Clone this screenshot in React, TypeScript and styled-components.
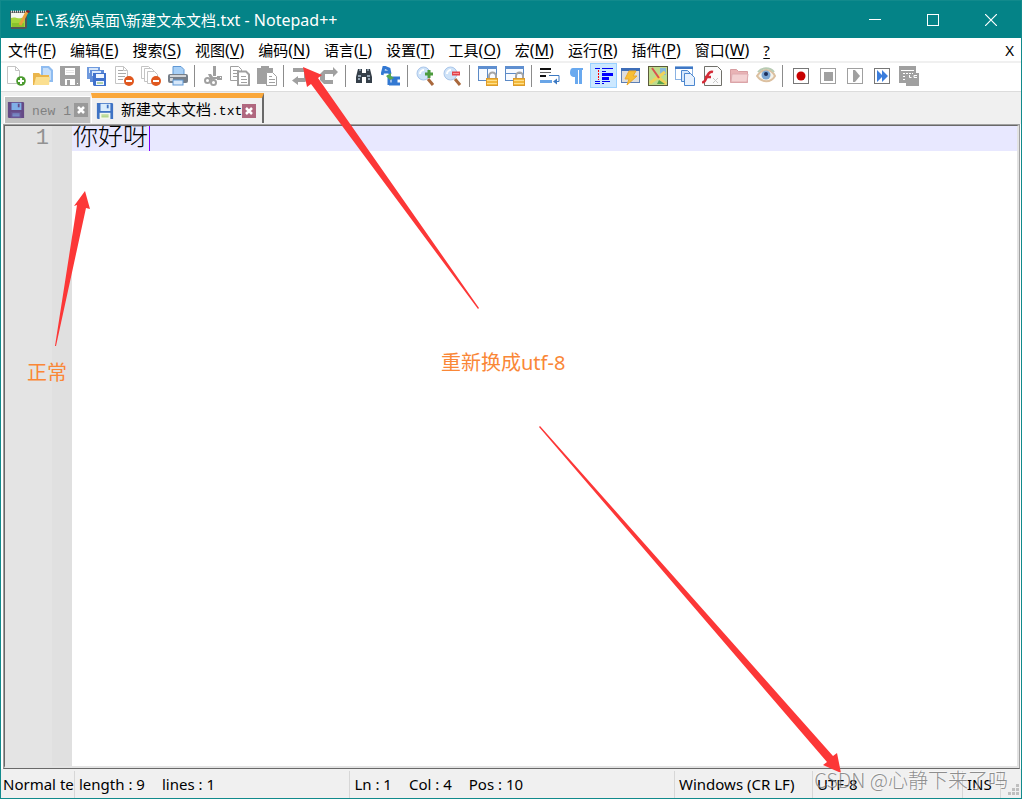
import React from "react";
import styled, { createGlobalStyle } from "styled-components";

const ui = `"Noto Sans", "Open Sans", "Noto Sans CJK SC", sans-serif`;
const mono = `"Liberation Mono", "Noto Sans CJK SC", monospace`;

const Global = createGlobalStyle`
  * { box-sizing: border-box; }
  body { margin: 0; font-family: ${ui}; font-size: 15px; color: #000; }
  button { font: inherit; color: inherit; background: none; border: 0; padding: 0; margin: 0; }
`;

const Window = styled.div`
  position: relative;
  display: flex;
  flex-direction: column;
  min-height: 100vh;
  border: 1px solid #118a8c;
  background: #fff;
  overflow: hidden;
`;

const TitleBar = styled.header`
  display: flex;
  align-items: center;
  height: 37px;
  padding: 0 1px 0 8px;
  background: #048387;
  color: #fff;
`;

const Title = styled.h1`
  flex: 1;
  margin: 0 0 0 5px;
  font-size: 15px;
  font-weight: 400;
  line-height: 20px;
  white-space: nowrap;
`;

const Latin = styled.span`
  font-size: 16px;
`;

const WindowButton = styled.button`
  display: flex;
  align-items: center;
  justify-content: center;
  width: 58px;
  height: 37px;
`;

const MenuBar = styled.nav`
  display: flex;
  gap: 14px;
  height: 25px;
  padding: 0 7px;
  border-bottom: 2px solid #f0f0f0;
`;

const MenuItem = styled.button<{ $last?: boolean }>`
  line-height: 24px;
  white-space: nowrap;
  margin-left: ${(p) => (p.$last ? "auto" : "0")};
  u { text-underline-offset: 2px; }
`;

const ToolBar = styled.div`
  display: flex;
  height: 29px;
  padding-left: 1px;
  border-bottom: 1px solid #dcdcdc;
`;

const ToolButton = styled.button<{ $on?: boolean }>`
  display: flex;
  align-items: center;
  justify-content: center;
  width: 27px;
  height: 25px;
  border: 1px solid ${(p) => (p.$on ? "#99d1ff" : "transparent")};
  background: ${(p) => (p.$on ? "#cce8ff" : "none")};
`;

const Separator = styled.span`
  width: 8px;
  height: 22px;
  margin-top: 2px;
  background: linear-gradient(#8c8c8c, #8c8c8c) 3px 0 / 1px 100% no-repeat;
`;

const TabStrip = styled.div`
  display: flex;
  align-items: flex-end;
  height: 32px;
  padding: 0 3px 1px;
  background: #f0f0f0;
`;

const Tab = styled.div<{ $active?: boolean }>`
  display: flex;
  align-items: center;
  height: ${(p) => (p.$active ? "30px" : "27px")};
  padding: 0 ${(p) => (p.$active ? "6px" : "2px")} 0 ${(p) => (p.$active ? "4px" : "2px")};
  border-top: ${(p) => (p.$active ? "5px solid #faa83c" : "1px solid #fff")};
  border-left: 1px solid #fff;
  border-right: ${(p) => (p.$active ? "2px solid #696969" : "1px solid #e8e8e8")};
  background: ${(p) => (p.$active ? "#f0f0f0" : "#c0c0c0")};
  color: ${(p) => (p.$active ? "#000" : "#808080")};
`;

const TabLabel = styled.button`
  margin-left: 7px;
  padding-top: 3px;
  font-family: ${mono};
  font-size: 13px;
  line-height: 20px;
  white-space: pre;
`;

const TabName = styled.span`
  font-size: 15px;
`;

const TabClose = styled.button<{ $active?: boolean }>`
  display: flex;
  width: 14px;
  height: 14px;
  margin-left: ${(p) => (p.$active ? "0" : "3px")};
  background: ${(p) => (p.$active ? "#b0677f" : "#999")};
`;

const Frame = styled.main`
  flex: 1;
  display: flex;
  margin: 0 1px 0 2px;
  border: 1px solid #a0a0a0;
  border-bottom-color: #696969;
`;

const Editor = styled.div`
  flex: 1;
  display: flex;
  border-style: solid;
  border-width: 1px 2px 2px 1px;
  border-color: #696969 #e3e3e3 #e3e3e3 #696969;
`;

const LineNumbers = styled.div`
  width: 47px;
  padding-right: 3px;
  background: #e4e4e4;
  color: #929292;
  font: 22px/25px ${mono};
  text-align: right;
`;

const FoldMargin = styled.div`
  width: 20px;
  background: #e0e0e0;
`;

const TextPane = styled.div`
  position: relative;
  flex: 1;
  display: flex;
`;

const Source = styled.textarea`
  flex: 1;
  border: 0;
  outline: 0;
  margin: 0;
  padding: 0 1px;
  resize: none;
  color: #000;
  background: linear-gradient(#e8e8ff, #e8e8ff) 0 0 / 100% 25px no-repeat #fff;
  font: 300 25px/25px ${mono};
`;

const Caret = styled.span`
  position: absolute;
  left: 77px;
  top: 0;
  width: 1px;
  height: 25px;
  background: #8000ff;
`;

const StatusBar = styled.footer`
  display: flex;
  height: 29px;
  padding-top: 2px;
  background: #f0f0f0;
`;

const StatusCell = styled.div<{ $w?: number; $grow?: number }>`
  flex: ${(p) => (p.$grow ? `${p.$grow} 1 0` : `0 0 ${p.$w}px`)};
  display: flex;
  gap: 17px;
  height: 27px;
  padding-left: ${(p) => (p.$w === 74 ? "2px" : "4px")};
  border-right: 1px solid #d7d7d7;
  line-height: 26px;
  white-space: nowrap;
  overflow: hidden;
`;

const Grip = styled.div`
  flex: 0 0 20px;
  display: flex;
  align-items: flex-end;
  justify-content: flex-end;
  padding: 0 1px 2px 0;
`;

const Note = styled.p<{ $x: number; $y: number }>`
  position: absolute;
  left: ${(p) => p.$x}px;
  top: ${(p) => p.$y}px;
  margin: 0;
  color: #fa8737;
  font-size: 20px;
  line-height: 24px;
  white-space: nowrap;
`;

const Arrow = styled.svg<{ $x: number; $y: number }>`
  position: absolute;
  left: ${(p) => p.$x}px;
  top: ${(p) => p.$y}px;
  fill: #fc3737;
  pointer-events: none;
`;

const Watermark = styled.p`
  position: absolute;
  right: 13px;
  bottom: 5px;
  margin: 0;
  color: rgba(110, 110, 110, 0.75);
  font-size: 20px;
  font-weight: 300;
  font-family: "Noto Sans CJK SC", sans-serif;
  line-height: 26px;
  white-space: nowrap;
  text-shadow: -1px -1px 0 rgba(255, 255, 255, 0.5);
`;

const G = "#a0a0a0";

const page = (x: number, y: number, stroke = "#9a9a9a", fill = "#fff") => (
  <path d={`M${x + 0.5} ${y + 0.5}h8l4 4v13h-12zM${x + 8.5} ${y + 0.5}v4h4`} fill={fill} stroke={stroke} />
);

const floppy = (a: string, b: string, c: string, slot = "#8cc152") => (
  <>
    <path d="M1 1h17l1 1v17H2l-1-1z" fill={a} />
    <rect x="5" y="2" width="11" height="8" fill={b} />
    <rect x="12" y="3" width="2" height="4" fill={a} />
    <rect x="4" y="12" width="12" height="7" fill={c} />
    <rect x="6" y="14" width="8" height="1" fill={slot} />
    <rect x="6" y="16" width="8" height="1" fill={slot} />
  </>
);

const minusBadge = (
  <>
    <circle cx="15" cy="15" r="5" fill="#e0581f" />
    <path d="M12 15h6" stroke="#fff" strokeWidth="2" />
  </>
);

const lens = (
  <>
    <path d="M12 13l5 6" stroke="#a9683c" strokeWidth="3" />
    <circle cx="7.5" cy="7.5" r="6.5" fill="#cfe3f8" stroke="#a9c6ea" />
    <path d="M4 8a4 4 0 0 1 4-4" stroke="#fff" strokeWidth="2" fill="none" />
  </>
);

const lock = (
  <>
    <path d="M11 13V10a3.500 3.500 0 0 1 7 0v3" stroke="#a5a5a5" strokeWidth="2" fill="none" />
    <rect x="8" y="12" width="12" height="8" fill="#f2b93b" />
    <path d="M9 14.500h10M9 17.500h10" stroke="#ffdf8b" />
    <rect x="8.500" y="12.500" width="11" height="7" fill="none" stroke="#dc9a2b" />
  </>
);

const panel = (
  <>
    <rect x="0.500" y="0.500" width="18" height="14" fill="#f7faff" stroke="#5c8ac6" />
    <rect x="0" y="0" width="19" height="3" fill="#5f8fd0" />
  </>
);

const icons: Record<string, React.ReactNode> = {
  新建: (
    <>
      {page(1, 0, "#c4c4c4")}
      <circle cx="15" cy="15" r="4.800" fill="#4b9b2f" />
      <path d="M15 12v6M12 15h6" stroke="#fff" strokeWidth="2" />
    </>
  ),
  打开: (
    <>
      <path d="M8 0h8l4 4v12H8z" fill="#8fbcf0" />
      <path d="M10 2h5l3 3v9h-8z" fill="#c5defa" />
      <path d="M0 7h6l2 2h8v10H0z" fill="#eab54c" />
      <path d="M1 19l2-8h14l-1 8z" fill="#fbdf90" />
    </>
  ),
  保存: (
    <>
      <path d="M0 0h20v20H1l-1-1z" fill={G} />
      <path d="M5 2h10v7H5zM5 13h10v6H5z" fill="#fff" />
      <path d="M6 4.500h8M6 6.500h8" stroke="#e4e4e4" />
      <path d="M7 14h3v5H7z" fill={G} />
      <path d="M17 17h1v1h-1z" fill="#fff" />
    </>
  ),
  全部保存: (
    <>
      <path d="M0 1h13v12H0z" fill="#6f9ade" />
      <path d="M2 2h9v5H2z" fill="#d7e7fb" />
      <path d="M3 4h14v12H3z" fill="#5f8cd8" />
      <path d="M5 5h9v5H5z" fill="#d7e7fb" />
      <path d="M6 7h13v13H7l-1-1z" fill="#3f71cc" />
      <path d="M9 8h8v4H9zM9 15h8v4H9z" fill="#eef5ff" />
      <path d="M10 17h6" stroke="#79b256" />
    </>
  ),
  关闭: (
    <>
      {page(1, 0, "#c4c4c4")}
      <path d="M4 4.500h5M4 7.500h8M4 10.500h7M4 13.500h5" stroke="#aaa" />
      {minusBadge}
    </>
  ),
  全部关闭: (
    <>
      <path d="M.5 .5h7l3 3v9H.5z" fill="#fff" stroke="#c4c4c4" />
      <path d="M3.500 2.500h7l3 3v10h-10z" fill="#fff" stroke="#c4c4c4" />
      <path d="M6.500 5.500h7l3 3v9h-10z" fill="#fff" stroke="#c4c4c4" />
      {minusBadge}
    </>
  ),
  打印: (
    <>
      <path d="M5 .5h8l3 3v7H5z" fill="#a8d0f7" stroke="#5f97d3" />
      <rect x="0" y="8" width="20" height="9" rx="2" fill="#777f89" />
      <path d="M2 10h16" stroke="#d2d5d8" strokeWidth="2" />
      <rect x="2" y="12" width="3" height="3" fill="#d5d8db" />
      <rect x="5" y="14" width="10" height="5" fill="#d7e8fa" stroke="#5f97d3" />
    </>
  ),
  剪切: (
    <>
      <path d="M10 0h3v10h-3zM5 8h3l2 3h5v2h-5l-2 2z" fill={G} />
      <path d="M14 10h5v4h-5z" fill={G} />
      <path d="M17 11h1v1h-1z" fill="#fff" />
      <circle cx="4.500" cy="14.500" r="2.500" fill="none" stroke={G} strokeWidth="2" />
      <circle cx="10.500" cy="16.500" r="2.500" fill="none" stroke={G} strokeWidth="2" />
    </>
  ),
  复制: (
    <>
      <path d="M.5 .5h8l3 3v11H.5z" fill="#fff" stroke={G} />
      <path d="M3 4.500h6M3 7.500h6M3 10.500h4" stroke={G} />
      <path d="M8 5.500h8l3 3v11H8z" fill="#fff" stroke={G} strokeWidth="2" />
      <path d="M11 10.500h5M11 13.500h6M11 16.500h6" stroke={G} />
    </>
  ),
  粘贴: (
    <>
      <path d="M0 2h4V0h8v2h4v16H0z" fill={G} />
      <path d="M9.500 6.500h6l4 4v9h-10z" fill="#fff" stroke={G} />
      <path d="M12 10.500h3M12 13.500h6M12 16.500h6" stroke={G} />
    </>
  ),
  撤销: <path d="M1 2h12l3 3v9l-3 2H6v3l-6-4.500L6 10v2h6V6H1z" fill={G} />,
  重做: <path d="M19 6l-5-5v3H5L1 8v6l4 4h9v-4H6V8h8v3z" fill={G} />,
  查找: (
    <>
      <path d="M4 3h4v4h4V3h4l2 8v6h-6v-6H8v6H2v-6z" fill="#353f49" />
      <path d="M4 10h3M13 10h3M4 13h2M14 13h2" stroke="#93a4b4" strokeWidth="2" />
      <path d="M5 4h2M13 4h2" stroke="#7d8c99" strokeWidth="2" />
    </>
  ),
  替换: (
    <>
      <path d="M1 9L3 1l5 2 1 5M2 6h6" stroke="#3278d2" strokeWidth="3" fill="none" />
      <path d="M8 9v10M8 12h4v6H8M19 12h-4v6h4" stroke="#3278d2" strokeWidth="3" fill="none" />
      <path d="M5 10l5-3v3l3 2-4 2z" fill="#57a850" />
    </>
  ),
  放大: (
    <>
      {lens}
      <path d="M13 4v8M9 8h8" stroke="#4c9b3d" strokeWidth="3" />
    </>
  ),
  缩小: (
    <>
      {lens}
      <path d="M9 7.500h8" stroke="#e4434b" strokeWidth="4" />
      <path d="M10 7.500h6" stroke="#f89095" />
    </>
  ),
  同步垂直滚动: (
    <>
      {panel}
      <path d="M9.500 3v12" stroke="#5c8ac6" />
      {lock}
    </>
  ),
  同步水平滚动: (
    <>
      {panel}
      <path d="M0 7.500h18" stroke="#5c8ac6" />
      {lock}
    </>
  ),
  自动换行: (
    <>
      <path d="M0 3h11M0 10h6" stroke="#111" strokeWidth="2" />
      <path d="M0 6.500h11" stroke="#666" />
      <path d="M9 9.500h10v6h-3" stroke="#3c79c2" fill="none" />
      <path d="M13 15.500l4-3v6z" fill="#3c79c2" />
      <path d="M0 15.500h12" stroke="#69a5e7" strokeWidth="3" />
    </>
  ),
  显示所有字符: <path d="M6 2h10v2h-1v14h-3V4h-1v14H8v-7C4 11 3 9 3 6.500S4 2 6 2z" fill="#69a9ef" />,
  显示缩进参考线: (
    <>
      <path d="M1 2.500h5M8 2.500h11M8 5.500h4M1 15.500h5M1 17.500h5M8 15.500h8M8 17.500h2" stroke="#0000ee" />
      <path d="M8 8.500h11M8 12.500h7" stroke="#0000ff" strokeWidth="3" />
      <path d="M4.500 4v10" stroke="#ff0000" strokeDasharray="2 1" />
    </>
  ),
  自定义语言: (
    <>
      <rect x="0.500" y="2.500" width="18" height="14" fill="#dedede" stroke="#5c7fb6" />
      <path d="M0 3.500h19" stroke="#3e6eb8" strokeWidth="3" />
      <path d="M8 5h7l-3 5h4L6 19l2-6H4z" fill="#f7bf36" stroke="#eba92c" />
    </>
  ),
  文档地图: (
    <>
      <rect x="0.500" y="0.500" width="19" height="19" fill="#bfdc8c" stroke="#5a5a3c" />
      <path d="M12 2h6v7h-6z" fill="#86b8dc" />
      <path d="M2 17L17 6M10 11l8 7" stroke="#f1d35b" strokeWidth="3" />
      <path d="M4 2l7 10" stroke="#d9534f" strokeWidth="2" />
      <path d="M11 14l6 4H9z" fill="#58a34d" />
    </>
  ),
  文档列表: (
    <>
      <rect x="0.500" y="0.500" width="17" height="13" fill="#fff" stroke="#8ab2e2" />
      <path d="M0 2h18" stroke="#3f77c4" strokeWidth="2" />
      <path d="M6.500 4.500h6l3 3v8h-9z" fill="#d5e7fb" stroke="#4c87cf" />
      <path d="M9.500 7.500h6l4 4v8h-10z" fill="#e7f1fd" stroke="#4c87cf" />
    </>
  ),
  函数列表: (
    <>
      <path d="M2.500 .5h13l4 4v15h-17z" fill="#fbfbfb" stroke="#70706a" />
      <path d="M0 16c5 2 4-12 11-10M3 11h6" stroke="#d32a36" strokeWidth="2.500" fill="none" />
      <path d="M11 12l5 5M16 12l-5 5" stroke="#c9c9c9" />
    </>
  ),
  文件夹工作区: (
    <>
      <path d="M1.500 3.500h6l2 2h9v11h-17z" fill="#e9b3b5" stroke="#d79da1" />
      <path d="M2 16l1-8h16l-1 8z" fill="#f3d1d2" stroke="#dfabaf" />
    </>
  ),
  监视: (
    <>
      <path d="M1 10c5-8 14-8 18 0-4 7-13 7-18 0z" fill="#f4f3ec" stroke="#dcc0a0" strokeWidth="2" />
      <path d="M2 6c4-5 12-5 16 0" stroke="#b8cbb3" strokeWidth="2" fill="none" />
      <circle cx="10" cy="9" r="4.500" fill="#7ba5d2" />
      <circle cx="10" cy="8" r="2" fill="#1b2e59" />
    </>
  ),
  录制宏: (
    <>
      <rect x="2.500" y="2.500" width="15" height="15" fill="#fff" stroke="#777" />
      <circle cx="10" cy="10" r="4.500" fill="#c80000" />
    </>
  ),
  停止录制: (
    <>
      <rect x="2.500" y="2.500" width="15" height="15" fill="#fff" stroke={G} />
      <rect x="6" y="6" width="9" height="9" fill={G} />
    </>
  ),
  播放宏: (
    <>
      <rect x="2.500" y="2.500" width="15" height="15" fill="#fff" stroke={G} />
      <path d="M8 4h2l5 6-5 6H8z" fill={G} />
    </>
  ),
  多次运行宏: (
    <>
      <rect x="2.500" y="2.500" width="15" height="15" fill="#fff" stroke="#777" />
      <path d="M5 4l5 5V4l6 6-6 6v-5l-5 5z" fill="#3b7ddc" />
    </>
  ),
  保存宏: (
    <>
      <path d="M0 0h17v17H0zM7 7h13v13H7z" fill={G} />
      <path d="M2 4.500h13" stroke="#fff" />
      <path d="M4 7.500h10M4 10.500h3M4 13.500h3" stroke="#fff" strokeDasharray="2 1" />
      <path d="M10.500 9v2.500h2M18 9.500h-3v2h3" stroke="#fff" fill="none" />
    </>
  ),
};

const toolGroups = [
  ["新建", "打开", "保存", "全部保存", "关闭", "全部关闭", "打印"],
  ["剪切", "复制", "粘贴"],
  ["撤销", "重做"],
  ["查找", "替换"],
  ["放大", "缩小"],
  ["同步垂直滚动", "同步水平滚动"],
  ["自动换行", "显示所有字符", "显示缩进参考线", "自定义语言", "文档地图", "文档列表", "函数列表", "文件夹工作区", "监视"],
  ["录制宏", "停止录制", "播放宏", "多次运行宏", "保存宏"],
];

const menus = [
  ["文件", "F"],
  ["编辑", "E"],
  ["搜索", "S"],
  ["视图", "V"],
  ["编码", "N"],
  ["语言", "L"],
  ["设置", "T"],
  ["工具", "O"],
  ["宏", "M"],
  ["运行", "R"],
  ["插件", "P"],
  ["窗口", "W"],
];

const CloseMark = () => (
  <svg width="14" height="14" viewBox="0 0 14 14">
    <path d="M4 4l6 6M10 4l-6 6" stroke="#fff" strokeWidth="2.500" />
  </svg>
);

export default function App() {
  return (
    <Window>
      <Global />
      <TitleBar>
        <svg width="21" height="21" viewBox="0 0 21 21">
          <path d="M1 2h17v17l-2 1H2z" fill="#555" />
          <path d="M2 4h14v14H2z" fill="#f4f6ee" />
          <path d="M2 9c4-2 8 2 14-1v10H2z" fill="#a5d63c" />
          <path d="M3 14h12v4H3z" fill="#8ac22c" />
          <path d="M2 2.500h15" stroke="#ddd" strokeWidth="2" strokeDasharray="1 1" />
          <path d="M18 3l-7 13" stroke="#e8a23d" strokeWidth="3" />
          <path d="M18 1l3 1-1 2-3-1z" fill="#8d1f24" />
        </svg>
        <Title>
          <Latin>E:\</Latin>系统<Latin>\</Latin>桌面<Latin>\</Latin>新建文本文档<Latin>.txt - Notepad++</Latin>
        </Title>
        <WindowButton aria-label="最小化">
          <svg width="12" height="12"><path d="M0 5.500h12" stroke="#fff" /></svg>
        </WindowButton>
        <WindowButton aria-label="最大化">
          <svg width="12" height="12"><rect x="0.500" y="0.500" width="11" height="11" fill="none" stroke="#fff" /></svg>
        </WindowButton>
        <WindowButton aria-label="关闭窗口">
          <svg width="12" height="12"><path d="M0 0l12 12M12 0L0 12" stroke="#fff" strokeWidth="1.200" /></svg>
        </WindowButton>
      </TitleBar>
      <MenuBar>
        {menus.map(([name, key]) => (
          <MenuItem key={key}>
            {name}<Latin>(<u>{key}</u>)</Latin>
          </MenuItem>
        ))}
        <MenuItem><u>?</u></MenuItem>
        <MenuItem $last>X</MenuItem>
      </MenuBar>
      <ToolBar>
        {toolGroups.map((group, i) => (
          <React.Fragment key={i}>
            {i > 0 && <Separator />}
            {group.map((name) => (
              <ToolButton key={name} aria-label={name} $on={name === "显示缩进参考线"}>
                <svg width="20" height="20" viewBox="0 0 20 20" fill="none">{icons[name]}</svg>
              </ToolButton>
            ))}
          </React.Fragment>
        ))}
      </ToolBar>
      <TabStrip>
        <Tab>
          <svg width="18" height="18" viewBox="0 0 20 20">{floppy("#654a86", "#80b0e8", "#6a5595", "#80b0e8")}</svg>
          <TabLabel>new 1</TabLabel>
          <TabClose aria-label="关闭 new 1"><CloseMark /></TabClose>
        </Tab>
        <Tab $active>
          <svg width="18" height="18" viewBox="0 0 20 20">{floppy("#3f73c4", "#d9ecfc", "#f3f8ee")}</svg>
          <TabLabel><TabName>新建文本文档</TabName>.txt</TabLabel>
          <TabClose $active aria-label="关闭 新建文本文档.txt"><CloseMark /></TabClose>
        </Tab>
      </TabStrip>
      <Frame>
        <Editor>
          <LineNumbers>1</LineNumbers>
          <FoldMargin />
          <TextPane>
            <Source aria-label="文档内容" defaultValue="你好呀" spellCheck={false} />
            <Caret />
          </TextPane>
        </Editor>
      </Frame>
      <StatusBar>
        <StatusCell $w={74}>Normal te</StatusCell>
        <StatusCell $grow={275}><span>length : 9</span><span>lines : 1</span></StatusCell>
        <StatusCell $grow={325}><span>Ln : 1</span><span>Col : 4</span><span>Pos : 10</span></StatusCell>
        <StatusCell $w={138}>Windows (CR LF)</StatusCell>
        <StatusCell $w={150}>UTF-8</StatusCell>
        <StatusCell $w={38}>INS</StatusCell>
        <Grip>
          <svg width="12" height="12" fill="#bfbfbf">
            <path d="M8 0h3v3h-3zM4 4h3v3h-3zM8 4h3v3h-3zM0 8h3v3h-3zM4 8h3v3h-3zM8 8h3v3h-3z" />
          </svg>
        </Grip>
      </StatusBar>
      <Note $x={26} $y={360}>正常</Note>
      <Note $x={440} $y={350}>重新换成utf-8</Note>
      <Arrow $x={52} $y={189} width="40" height="160">
        <path d="M32 1l5 18-4-1L3 156l-1 0L24 15l-3 1z" />
      </Arrow>
      <Arrow $x={298} $y={63} width="184" height="248">
        <path d="M4 3l19 8-4 3L180 244l-1 1L12 20l-4 3z" />
      </Arrow>
      <Arrow $x={537} $y={424} width="310" height="352">
        <path d="M303 348l-18-8 4-3L1 2l1-1L295 331l4-3z" />
      </Arrow>
      <Watermark>CSDN @心静下来了吗</Watermark>
    </Window>
  );
}
